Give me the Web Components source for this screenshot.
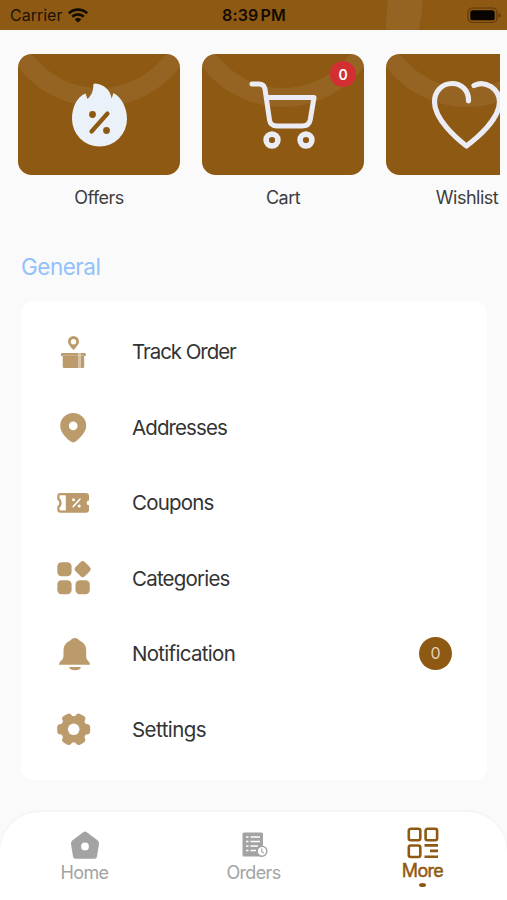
<!DOCTYPE html>
<html lang="en">
<head>
<meta charset="utf-8">
<title>More</title>
<style>
html,body{margin:0;height:100%}
body{font-family:Inter,"Liberation Sans",sans-serif;background:#fafafa;overflow:hidden;--brand:#8e5912;--tan:#bb9a6b}
</style>
</head>
<body>
<more-page></more-page>
<script>
const define = (name, html) => customElements.define(name, class extends HTMLElement {
  constructor() {
    super();
    const t = document.createElement('template');
    t.innerHTML = html;
    this.attachShadow({mode: 'open'}).append(t.content.cloneNode(true));
  }
});

define('status-bar', `
<style>
:host{display:grid;grid-template-columns:1fr auto 1fr;align-items:center;height:30px;background:var(--brand);color:#1b1309;position:relative;box-sizing:border-box;padding:0 5px 0 10px;overflow:hidden}
.ring{position:absolute;left:0;top:0}
.left{display:flex;align-items:center;gap:6px;font-size:16px;letter-spacing:0;position:relative}
.time{font-size:16px;font-weight:600;letter-spacing:.15px;position:relative;left:-2px;word-spacing:-2px;color:#120c04}
.right{display:flex;justify-content:flex-end;position:relative}
svg{display:block}
</style>
<svg class="ring" width="507" height="30"><path d="M386 30Q386 14 388 0H423Q422 16 419 30Z" fill="#fff" opacity=".07"/></svg>
<span class="left"><span>Carrier</span>
<svg width="20" height="15" viewBox="0 0 20 15"><g fill="none" stroke="#120c04" stroke-width="2.7"><path d="M.9 5.3a13 13 0 0 1 18.2 0"/><path d="M4.2 8.8a8.3 8.3 0 0 1 11.6 0"/></g><path d="M10 14.6 6.7 11.4a4.7 4.7 0 0 1 6.6 0Z" fill="#120c04"/></svg></span>
<span class="time">8:39 PM</span>
<span class="right"><svg width="35" height="17" viewBox="0 0 35 17"><rect x="1" y="1" width="29" height="14.5" rx="4.5" fill="none" stroke="#5f3b0a" stroke-width="1.2"/><rect x="3.3" y="3.3" width="24.4" height="10" rx="2.6" fill="#080400"/><path d="M31.7 6q2 .5 2 2.200t-2 2.200Z" fill="#5f3b0a"/></svg></span>`);

define('shortcut-tile', `
<style>
:host{display:flex;flex-direction:column;align-items:center;flex:none;width:162px}
.box{position:relative;width:162px;height:121px;border-radius:13.5px;background:var(--brand);overflow:hidden}
svg{display:block}
.label{margin-top:10px;line-height:26px;font-size:18px;letter-spacing:-.5px;color:#3d3d3d}
::slotted([slot=badge]){position:absolute;right:8px;top:7px;width:26px;height:26px;border-radius:50%;background:#d32f32;color:#fff;font-size:14px;font-weight:600;line-height:27px;text-align:center}
.icon{position:absolute;inset:0}
</style>
<div class="box"><svg width="162" height="121"><circle cx="81" cy="-49" r="92.500" fill="none" stroke="#fff" stroke-opacity=".07" stroke-width="19"/></svg>
<div class="icon"><slot name="icon"></slot></div><slot name="badge"></slot></div>
<span class="label"><slot></slot></span>`);

define('menu-row', `
<style>
:host{display:grid;grid-template-columns:36px 1fr auto;column-gap:40px;align-items:center;height:75.5px;padding:0 35px 0 35px;font-size:20.500px;color:#333;letter-spacing:var(--ls,-.8px)}
.icon{display:block;line-height:0;color:var(--tan)}
::slotted([slot=badge]){width:33px;height:33px;border-radius:50%;background:var(--brand);color:#e6d2b6;font-size:16px;line-height:33px;letter-spacing:0;text-align:center}
</style>
<span class="icon"><slot name="icon"></slot></span><span><slot></slot></span><slot name="badge"></slot>`);

define('menu-card', `
<style>:host{display:block;margin:0 20px 0 21px;padding:13px 0;background:#fff;border-radius:13px}</style><slot></slot>`);

define('nav-item', `
<style>
:host{display:flex;flex-direction:column;align-items:center;color:#a3a3a3;padding-top:17px}
::slotted(svg){display:block}
.label{font-size:18px;line-height:22px;letter-spacing:-.65px}
:host([active]){color:var(--brand);padding-top:13px}
:host([active]) .label{-webkit-text-stroke:.45px currentColor;margin-top:1px}
.dot{display:none;width:7px;height:4px;border-radius:50%;background:currentColor;margin-top:1px}
:host([active]) .dot{display:block}
</style>
<slot name="icon"></slot><span class="label"><slot></slot></span><i class="dot"></i>`);

define('bottom-nav', `
<style>:host{display:grid;grid-template-columns:repeat(3,1fr);height:88px;background:#fff;border-radius:40px 40px 0 0;box-shadow:0 -1px 3px rgba(0,0,0,.045)}</style><slot></slot>`);

define('more-page', `
<style>
:host{display:flex;flex-direction:column;width:507px;height:900px;background:#fafafa}
.tiles{display:flex;gap:22px;margin:24px 7px 0 0;padding-left:18px;overflow:hidden}
h2{margin:40px 0 0 21px;font-size:22.500px;font-weight:400;line-height:32px;letter-spacing:-.5px;color:#91c2fb}
menu-card{margin-top:18px}
bottom-nav{margin-top:auto}
svg{display:block}
</style>
<status-bar></status-bar>
<div class="tiles">
<shortcut-tile><svg slot="icon" width="162" height="121"><path d="M77 29.500C86 30 92.500 36.500 93.600 44.500L95.500 39C103 43 109 53 109 65A27.500 27.500 0 0 1 54 65C54 53 59 43 67.500 39.500L69.500 45C74 41 75.500 36 75.200 31Q75.300 29.500 77 29.500Z" fill="#eaf1f8"/><g fill="var(--brand)"><circle cx="74.500" cy="60.500" r="3.400"/><circle cx="88.500" cy="76.500" r="3.400"/></g><path d="M73.500 77.500 89.500 59.500" stroke="var(--brand)" stroke-width="4.200" stroke-linecap="round"/></svg>Offers</shortcut-tile>
<shortcut-tile><svg slot="icon" width="162" height="121" fill="none" stroke="#ececf4" stroke-width="5" stroke-linecap="round" stroke-linejoin="round"><path d="M50 30H57Q62 30 63 35L67.500 66Q68.500 72 75 72H100Q107 72 108.200 66L112 43.500H65"/><circle cx="70" cy="86" r="5.900" stroke-width="5.600"/><circle cx="104" cy="86" r="5.900" stroke-width="5.600"/></svg>Cart<span slot="badge">0</span></shortcut-tile>
<shortcut-tile><svg slot="icon" width="162" height="121" fill="none" stroke="#ececf4" stroke-width="5.200" stroke-linecap="round" stroke-linejoin="round"><path d="M82.500 47C83 36 75 29.500 66 29.500C56 29.500 48.500 37.500 48.500 48C48.500 65 70 84 80.500 92C91 84 113.500 65 113.500 48C113.500 35 99.500 25.500 88 31.500"/></svg>Wishlist</shortcut-tile>
</div>
<h2>General</h2>
<menu-card>
<menu-row style="--ls:-1.050px"><svg slot="icon" width="36" height="36" fill="currentColor"><path fill-rule="evenodd" d="M17.500 2A5.500 5.500 0 0 1 23 7.500C23 11 19 14 17.500 16.200C16 14 12 11 12 7.500A5.500 5.500 0 0 1 17.500 2ZM17.500 5A2.700 2.700 0 1 0 17.500 10.400A2.700 2.700 0 1 0 17.500 5Z"/><path d="M6 19H22.300V34H8Q6.700 34 6.700 32.700V22H5V20Q5 19 6 19ZM24.700 19H28.700Q29.700 19 29.700 20V22H28.200V32.700Q28.200 34 27 34H24.700Z"/><path d="M22.300 19H24.700V34H22.300Z" opacity=".6"/><path d="M7 21.300H28" stroke="#fff" stroke-width=".7" opacity=".4"/></svg>Track Order</menu-row>
<menu-row style="--ls:-.9px"><svg slot="icon" width="36" height="36" fill="currentColor"><path fill-rule="evenodd" d="M17.200 4A13 12.800 0 0 1 30.200 17C30.200 23 24 29 20 32.300Q17.200 34.500 14.400 32.300C10 29 4.200 23 4.200 17A13 12.800 0 0 1 17.200 4ZM17.200 12.400A4.400 4.400 0 1 0 17.200 21.200A4.400 4.400 0 1 0 17.200 12.400Z"/></svg>Addresses</menu-row>
<menu-row><svg slot="icon" width="36" height="36"><path fill="currentColor" fill-rule="evenodd" d="M4.500 8H30Q33 8 33 11V15.500A2.400 2.400 0 0 0 33 20.300V24.700Q33 27.700 30 27.700H4.500Q1.300 27.700 1.300 24.700V21.200Q3.300 20.500 3.300 18T1.300 14.800V11Q1.300 8 4.500 8ZM4.500 10.300Q3.500 10.300 3.500 11.300V13.300Q5.700 15 5.700 18T3.500 22.500V24.400Q3.500 25.500 4.600 25.500H9.800V10.300Z"/><g fill="#fff"><circle cx="17.500" cy="14.800" r="1.500"/><circle cx="23.200" cy="21" r="1.500"/></g><path d="M17.200 21.500 23.900 14.200" stroke="#fff" stroke-width="1.700" stroke-linecap="round"/></svg>Coupons</menu-row>
<menu-row><svg slot="icon" width="36" height="36" fill="currentColor"><rect x="1.300" y="2.300" width="14.300" height="14" rx="4.200"/><rect x="1.300" y="20.200" width="14.300" height="14" rx="4.200"/><rect x="19.500" y="20.200" width="14.300" height="14" rx="4.200"/><rect x="20.200" y="2.600" width="13" height="13" rx="3.300" transform="rotate(45 26.700 9.100)"/></svg>Categories</menu-row>
<menu-row style="--ls:-.7px"><svg slot="icon" width="36" height="36" fill="currentColor"><path d="M15.800 3Q18.900 1 22 3Q22.500 4.200 24 4.700Q30.200 7.500 30.200 14V21Q30.200 23.500 32 24.700Q34 26.300 34 28.700H3Q3 26.300 5 24.700Q7.500 23 7.500 20V14Q7.500 7.500 13.800 4.700Q15.200 4.200 15.800 3ZM13 31H25Q24 34.200 19 34.200T13 31Z"/></svg>Notification<span slot="badge">0</span></menu-row>
<menu-row style="--ls:-.55px"><svg slot="icon" width="36" height="36" fill="currentColor"><circle cx="17.700" cy="18.300" r="13.200"/><rect x="1.200" y="13" width="33" height="10.600" rx="3.600"/><rect x="1.200" y="13" width="33" height="10.600" rx="3.600" transform="rotate(60 17.700 18.300)"/><rect x="1.200" y="13" width="33" height="10.600" rx="3.600" transform="rotate(120 17.700 18.300)"/><circle cx="17.700" cy="18.300" r="5.800" fill="#fff"/></svg>Settings</menu-row>
</menu-card>
<bottom-nav>
<nav-item><svg slot="icon" width="30" height="33" fill="currentColor"><path fill-rule="evenodd" d="M13.500 3Q15 1.800 16.500 3L27.500 11.300Q29.400 12.700 29 15L27 27.500Q26.700 29.800 24.500 29.800H5.500Q3.300 29.800 3 27.500L1 15Q.6 12.700 2.500 11.300ZM15 13.500A3.900 3.900 0 1 0 15 21.300A3.900 3.900 0 1 0 15 13.500Z"/></svg>Home</nav-item>
<nav-item><svg slot="icon" width="28" height="33" viewBox="0 0 28 33"><rect x="2.500" y="3.500" width="20.500" height="24" rx="1.500" fill="currentColor"/><g stroke="#fff" stroke-width="1.300"><path d="M6 8H8.500M10.500 8H20M6 12.500H8.500M10.500 12.500H20M6 17H8.500M10.500 17H18M6 21.500H8.500M10.500 21.500H16"/></g><circle cx="22" cy="22.300" r="4.900" fill="#fff" stroke="currentColor" stroke-width="1.400"/><path d="M21.700 19.500V22.800L23.800 24" fill="none" stroke="currentColor" stroke-width="1.100"/></svg>Orders</nav-item>
<nav-item active><svg slot="icon" width="34" height="34" fill="none" stroke="currentColor" stroke-width="2.600"><rect x="2.800" y="3.800" width="11.500" height="11.500" rx="2"/><rect x="19.600" y="3.800" width="11.500" height="11.500" rx="2"/><rect x="2.800" y="20.500" width="11.500" height="11.500" rx="2"/><path d="M18.500 20.400H32M24 25.900H32M18.500 31.800H32"/></svg>More</nav-item>
</bottom-nav>`);
</script>
</body>
</html>
